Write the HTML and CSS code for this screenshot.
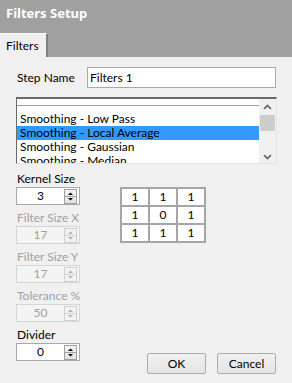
FILE: index.html
```html
<!DOCTYPE html>
<html lang="en">

<head>
    <meta charset="UTF-8">
    <title>Filters Setup</title>
    <link rel="stylesheet" href="styles.css">
</head>

<body>
    <div class="window">
        <div class="titlebar">Filters Setup</div>
        <div class="tabs">
            <div class="tab">Filters</div>
        </div>
        <div class="panel">
            <div class="name-row">
                <span class="name-label">Step Name</span>
                <div class="text-input">Filters 1</div>
            </div>

            <div class="listbox">
                <div class="list-items">
                    <div class="list-sep"></div>
                    <div class="item">Smoothing - Low Pass</div>
                    <div class="item selected">Smoothing - Local Average</div>
                    <div class="item">Smoothing - Gaussian</div>
                    <div class="item">Smoothing - Median</div>
                </div>
                <div class="scrollbar">
                    <svg class="chevron" width="9" height="6" viewBox="0 0 9 6">
                        <polyline points="1,5 4.5,1.5 8,5" />
                    </svg>
                    <div class="thumb"></div>
                    <div class="track"></div>
                    <svg class="chevron" width="9" height="6" viewBox="0 0 9 6">
                        <polyline points="1,1 4.5,4.5 8,1" />
                    </svg>
                </div>
            </div>

            <div class="lower">
                <div class="params">
                    <div class="param">
                        <div class="param-label">Kernel Size</div>
                        <div class="spin">
                            <span class="spin-value">3</span>
                            <span class="spin-btn">
                                <svg width="11" height="13" viewBox="0 0 11 13">
                                    <polygon points="3,5 8,5 5.5,2.5" />
                                    <line x1="0" y1="6.5" x2="11" y2="6.5" />
                                    <polygon points="3,8 8,8 5.5,10.5" />
                                </svg>
                            </span>
                        </div>
                    </div>
                    <div class="param disabled">
                        <div class="param-label">Filter Size X</div>
                        <div class="spin">
                            <span class="spin-value">17</span>
                            <span class="spin-btn">
                                <svg width="11" height="13" viewBox="0 0 11 13">
                                    <polygon points="3,5 8,5 5.5,2.5" />
                                    <line x1="0" y1="6.5" x2="11" y2="6.5" />
                                    <polygon points="3,8 8,8 5.5,10.5" />
                                </svg>
                            </span>
                        </div>
                    </div>
                    <div class="param disabled">
                        <div class="param-label">Filter Size Y</div>
                        <div class="spin">
                            <span class="spin-value">17</span>
                            <span class="spin-btn">
                                <svg width="11" height="13" viewBox="0 0 11 13">
                                    <polygon points="3,5 8,5 5.5,2.5" />
                                    <line x1="0" y1="6.5" x2="11" y2="6.5" />
                                    <polygon points="3,8 8,8 5.5,10.5" />
                                </svg>
                            </span>
                        </div>
                    </div>
                    <div class="param disabled">
                        <div class="param-label">Tolerance %</div>
                        <div class="spin">
                            <span class="spin-value">50</span>
                            <span class="spin-btn">
                                <svg width="11" height="13" viewBox="0 0 11 13">
                                    <polygon points="3,5 8,5 5.5,2.5" />
                                    <line x1="0" y1="6.5" x2="11" y2="6.5" />
                                    <polygon points="3,8 8,8 5.5,10.5" />
                                </svg>
                            </span>
                        </div>
                    </div>
                    <div class="param">
                        <div class="param-label">Divider</div>
                        <div class="spin">
                            <span class="spin-value">0</span>
                            <span class="spin-btn">
                                <svg width="11" height="13" viewBox="0 0 11 13">
                                    <polygon points="3,5 8,5 5.5,2.5" />
                                    <line x1="0" y1="6.5" x2="11" y2="6.5" />
                                    <polygon points="3,8 8,8 5.5,10.5" />
                                </svg>
                            </span>
                        </div>
                    </div>
                </div>

                <div class="side">
                    <div class="matrix">
                        <span class="cell">1</span><span class="cell">1</span><span class="cell">1</span>
                        <span class="cell">1</span><span class="cell">0</span><span class="cell">1</span>
                        <span class="cell">1</span><span class="cell">1</span><span class="cell">1</span>
                    </div>
                    <div class="buttons">
                        <button>OK</button>
                        <button>Cancel</button>
                    </div>
                </div>
            </div>
        </div>
    </div>
</body>

</html>
```

FILE: styles.css
```css
* {
    margin: 0;
    padding: 0;
    box-sizing: border-box;
}

body {
    font-family: 'Lato', sans-serif;
    font-size: 12px;
    color: #000;
    background-color: #f0f0f0;
}

.window {
    width: 292px;
    height: 383px;
    display: flex;
    flex-direction: column;
    background-color: #f0f0f0;
}

.titlebar {
    height: 33px;
    line-height: 27px;
    padding-left: 6px;
    background-color: #a0a0a0;
    color: #fff;
    font-family: 'Noto Sans', sans-serif;
    font-weight: bold;
    font-size: 13px;
}

.tabs {
    height: 24px;
    background-color: #a0a0a0;
    display: flex;
}

.tab {
    width: 48px;
    line-height: 24px;
    padding-left: 6px;
    background-color: #f0f0f0;
    border-right: 2px solid #808080;
    border-top: 1px solid #f8f8f8;
}

.panel {
    flex: 1;
    display: flex;
    flex-direction: column;
}

.name-row {
    display: flex;
    align-items: center;
    margin-top: 10px;
    padding: 0 16px 0 17px;
}

.name-label {
    width: 70px;
}

.text-input {
    flex: 1;
    height: 21px;
    line-height: 19px;
    padding-left: 2px;
    background-color: #fff;
    border: 1px solid #a9a9a9;
}

.listbox {
    display: flex;
    height: 67px;
    margin: 9px 15px 0 16px;
    background-color: #fff;
    border-top: 2px solid #6a6a6a;
    border-left: 1px solid #6a6a6a;
    border-right: 1px solid #e3e3e3;
    border-bottom: 1px solid #e3e3e3;
    overflow: hidden;
}

.list-items {
    flex: 1;
    overflow: hidden;
}

.list-sep {
    height: 7px;
    border-bottom: 1px solid #a0a0a0;
    margin-bottom: 6px;
}

.item {
    height: 14px;
    line-height: 14px;
    padding-left: 3px;
    white-space: nowrap;
}

.item.selected {
    background-color: #3399ff;
}

.scrollbar {
    width: 17px;
    display: flex;
    flex-direction: column;
    align-items: center;
    background-color: #f0f0f0;
    padding: 5px 0 3px;
}

.chevron polyline {
    fill: none;
    stroke: #606060;
    stroke-width: 1.6;
}

.thumb {
    width: 15px;
    height: 16px;
    margin-top: 5px;
    background-color: #cdcdcd;
}

.track {
    flex: 1;
}

.lower {
    flex: 1;
    display: grid;
    grid-template-columns: 64px 1fr;
    column-gap: 40px;
    margin-top: 7px;
    padding: 0 16px 9px 16px;
}

.params {
    display: flex;
    flex-direction: column;
    gap: 5px;
}

.param-label {
    height: 16px;
    line-height: 16px;
    padding-left: 1px;
    white-space: nowrap;
}

.spin {
    width: 64px;
    height: 18px;
    display: flex;
    align-items: center;
    background-color: #fff;
    border: 1px solid #a9a9a9;
    padding-right: 2px;
}

.spin-value {
    flex: 1;
    text-align: center;
    line-height: 16px;
}

.spin-btn {
    width: 13px;
    height: 15px;
    display: flex;
    align-items: center;
    justify-content: center;
    border: 1px solid #a0a0a0;
    background: linear-gradient(#f4f4f4, #e2e2e2);
}

.spin-btn polygon {
    fill: #000;
}

.spin-btn line {
    stroke: #a0a0a0;
    stroke-width: 1;
}

.param.disabled .param-label {
    color: #a0a0a0;
}

.param.disabled .spin {
    background-color: #f4f4f4;
    border-color: #d5d5d5;
}

.param.disabled .spin-value {
    color: #a0a0a0;
}

.param.disabled .spin-btn {
    border-color: #d0d0d0;
    background: #f2f2f2;
}

.param.disabled .spin-btn polygon {
    fill: #b0b0b0;
}

.param.disabled .spin-btn line {
    stroke: #d0d0d0;
}

.side {
    display: flex;
    flex-direction: column;
    justify-content: space-between;
    align-items: flex-start;
    padding-top: 16px;
}

.matrix {
    display: grid;
    grid-template-columns: repeat(3, 26px);
    grid-auto-rows: 16px;
    gap: 2px;
    padding: 2px;
    background-color: #a6a6a6;
}

.cell {
    background-color: #fff;
    text-align: center;
    line-height: 16px;
}

.buttons {
    align-self: flex-end;
    display: flex;
    gap: 11px;
}

.buttons button {
    width: 59px;
    height: 21px;
    font-family: 'Lato', sans-serif;
    font-size: 12px;
    color: #000;
    border: 1px solid #acacac;
    border-radius: 2px;
    background: linear-gradient(#f0f0f0, #e5e5e5);
}
```
